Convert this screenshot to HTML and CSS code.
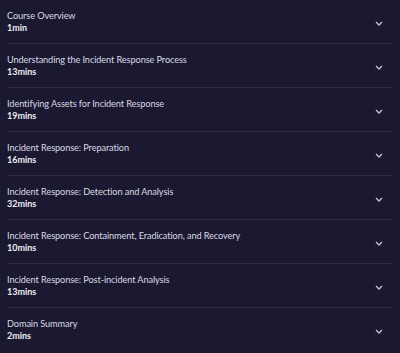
FILE: index.html
```html
<!DOCTYPE html>
<html>
<head>
<meta charset="utf-8">
<link rel="stylesheet" href="styles.css">
</head>
<body>
<ul class="list">
  <li class="row"><div class="info"><div class="title">Course Overview</div><div class="dur">1min</div></div><svg class="chev" viewBox="0 0 8 5"><path d="M1 1l3 3 3-3"/></svg></li>
  <li class="row"><div class="info"><div class="title">Understanding the Incident Response Process</div><div class="dur">13mins</div></div><svg class="chev" viewBox="0 0 8 5"><path d="M1 1l3 3 3-3"/></svg></li>
  <li class="row"><div class="info"><div class="title">Identifying Assets for Incident Response</div><div class="dur">19mins</div></div><svg class="chev" viewBox="0 0 8 5"><path d="M1 1l3 3 3-3"/></svg></li>
  <li class="row"><div class="info"><div class="title">Incident Response: Preparation</div><div class="dur">16mins</div></div><svg class="chev" viewBox="0 0 8 5"><path d="M1 1l3 3 3-3"/></svg></li>
  <li class="row"><div class="info"><div class="title">Incident Response: Detection and Analysis</div><div class="dur">32mins</div></div><svg class="chev" viewBox="0 0 8 5"><path d="M1 1l3 3 3-3"/></svg></li>
  <li class="row"><div class="info"><div class="title">Incident Response: Containment, Eradication, and Recovery</div><div class="dur">10mins</div></div><svg class="chev" viewBox="0 0 8 5"><path d="M1 1l3 3 3-3"/></svg></li>
  <li class="row"><div class="info"><div class="title">Incident Response: Post-incident Analysis</div><div class="dur">13mins</div></div><svg class="chev" viewBox="0 0 8 5"><path d="M1 1l3 3 3-3"/></svg></li>
  <li class="row last"><div class="info"><div class="title">Domain Summary</div><div class="dur">2mins</div></div><svg class="chev" viewBox="0 0 8 5"><path d="M1 1l3 3 3-3"/></svg></li>
</ul>
</body>
</html>
```
FILE: styles.css
```css
html, body {
  margin: 0;
  padding: 0;
  background: #1b1932;
  font-family: Lato, "Liberation Sans", sans-serif;
}
.list {
  list-style: none;
  margin: 0;
  padding: 0 7px;
}
.row {
  display: flex;
  align-items: center;
  justify-content: space-between;
  box-sizing: border-box;
  height: 44px;
  padding: 0 10px 0 0;
  border-bottom: 1px solid #2d2b48;
}
.row.last { border-bottom: none; }
.info {
  display: flex;
  flex-direction: column;
}
.title {
  font-size: 9.2px;
  line-height: 12px;
  color: #d9d8e2;
  letter-spacing: -0.1px;
}
.dur {
  font-size: 9px;
  line-height: 12px;
  color: #ecebf2;
  font-weight: 700;
  letter-spacing: 0;
}
.chev {
  width: 8px;
  height: 5px;
  margin-top: 3px;
  fill: none;
  stroke: #c9c7d8;
  stroke-width: 1.3;
}
```
